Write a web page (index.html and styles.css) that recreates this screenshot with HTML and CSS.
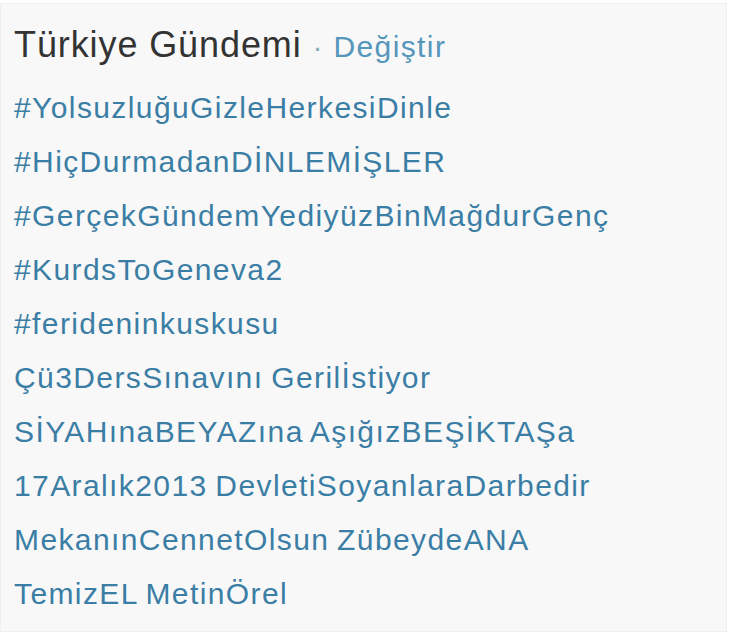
FILE: index.html
```html
<!DOCTYPE html>
<html lang="tr">
<head>
    <meta charset="UTF-8">
    <meta name="viewport" content="width=device-width, initial-scale=1.0">
    <title>Türkiye Gündemi</title>
    <link rel="stylesheet" href="styles.css">
</head>
<body>
    <div class="trends">
        <h3 class="trends-title">Türkiye Gündemi <span class="dot">·</span> <a href="#" class="change">Değiştir</a></h3>
        <ul class="trend-list">
            <li><a href="#">#YolsuzluğuGizleHerkesiDinle</a></li>
            <li><a href="#">#HiçDurmadanDİNLEMİŞLER</a></li>
            <li><a href="#">#GerçekGündemYediyüzBinMağdurGenç</a></li>
            <li><a href="#">#KurdsToGeneva2</a></li>
            <li><a href="#">#ferideninkuskusu</a></li>
            <li><a href="#">Çü3DersSınavını Gerilİstiyor</a></li>
            <li><a href="#">SİYAHınaBEYAZına AşığızBEŞİKTAŞa</a></li>
            <li><a href="#">17Aralık2013 DevletiSoyanlaraDarbedir</a></li>
            <li><a href="#">MekanınCennetOlsun ZübeydeANA</a></li>
            <li><a href="#">TemizEL MetinÖrel</a></li>
        </ul>
    </div>
</body>
</html>
```

FILE: styles.css
```css
body {
    margin: 0;
    background: #fff;
    font-family: "Liberation Sans", Arial, sans-serif;
}
.trends {
    margin: 3px 3px 4px 0;
    height: 629px;
    box-sizing: border-box;
    padding: 21px 10px 0 13px;
    background: #f8f8f8;
    border: 1px solid #efefef;
}
.trends-title {
    margin: 0 0 14px;
    font-size: 36px;
    line-height: 40px;
    font-weight: normal;
    letter-spacing: 0.9px;
    color: #333;
}
.trends-title .dot {
    font-size: 30px;
    color: #8aa9bb;
    letter-spacing: 0;
}
.change {
    font-size: 30px;
    letter-spacing: 1.4px;
    color: #5596bb;
    text-decoration: none;
}
.trend-list {
    list-style: none;
    margin: 0;
    padding: 0;
}
.trend-list li {
    font-size: 30px;
    line-height: 54px;
    letter-spacing: 1.4px;
    word-spacing: -2px;
    white-space: nowrap;
}
.trend-list a {
    color: #3b7ea5;
    text-decoration: none;
}
```
